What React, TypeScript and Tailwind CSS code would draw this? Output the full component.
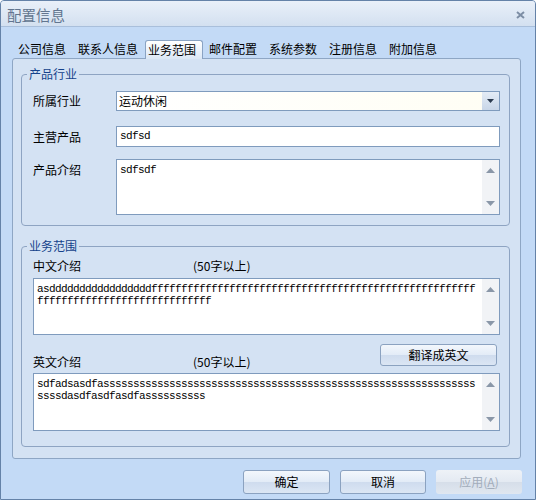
import React from "react";

const btnBg =
  "bg-[linear-gradient(to_bottom,#f3f7fc_0%,#e3ecf7_48%,#cfdcee_52%,#dbe6f4_100%)]";

function Arrow({ up }: { up?: boolean }) {
  return (
    <svg width="9" height="5" viewBox="0 0 9 5">
      <path d={up ? "M0 5 L4.5 0 L9 5 Z" : "M0 0 L4.5 5 L9 0 Z"} fill="#8a97a8" />
    </svg>
  );
}

function VScroll() {
  return (
    <div className="w-[17px] shrink-0 self-stretch bg-[#f1f3f6] flex flex-col justify-between items-center py-[8px]">
      <Arrow up />
      <Arrow />
    </div>
  );
}

function TextBox({ h, lines }: { h: string; lines: string[] }) {
  return (
    <div className={`flex border border-[#7f9bbd] bg-white ${h}`}>
      <div className="flex-1 pl-[3px] pt-[4px] font-['Liberation_Mono',monospace] text-[11px] tracking-[-0.6px] leading-[12px] text-black whitespace-pre overflow-hidden">
        {lines.map((l, i) => (
          <div key={i}>{l}</div>
        ))}
      </div>
      <VScroll />
    </div>
  );
}

function Tab({ label, active }: { label: string; active?: boolean }) {
  if (active) {
    return (
      <div className="relative z-10 ml-[1px] mb-[-1px] h-[19px] pl-[2px] pr-[6px] border border-b-0 border-[#8aa3c3] rounded-t-[3px] bg-[linear-gradient(to_bottom,#ffffff,#dbe7f5)] leading-[17px]">
        {label}
      </div>
    );
  }
  return <div className="h-[18px] px-[6px] leading-[18px]">{label}</div>;
}

export default function App() {
  const zh1 = "as" + "d".repeat(17) + "f".repeat(54);
  const zh2 = "f".repeat(29);
  const en1 = "sdfadsasdfa" + "s".repeat(62);
  const en2 = "ssssdasdfasdfasdfa" + "s".repeat(10);

  return (
    <div className="w-[536px] h-[500px] flex flex-col border border-[#6482a8] rounded-t-[4px] bg-[#c3daf6] text-[12px] text-black font-['Noto_Sans_CJK_SC','Noto_Sans',sans-serif] overflow-hidden">
      {/* title bar */}
      <div className="h-[26px] shrink-0 flex items-center justify-between pl-[6px] pr-[10px] pt-[2px] border-b border-[#a9bfdb] bg-[linear-gradient(to_bottom,#e9f0f9,#d3e0f0)]">
        <span className="text-[14.5px] text-[#62758f] leading-[20px]">配置信息</span>
        <svg width="9" height="8" viewBox="0 0 9 8">
          <path d="M1 1 L8 7 M8 1 L1 7" stroke="#7d8ea5" strokeWidth="2" />
        </svg>
      </div>

      {/* tabs */}
      <div className="h-[31px] shrink-0 flex items-end pl-[11px]">
        <Tab label="公司信息" />
        <Tab label="联系人信息" />
        <Tab label="业务范围" active />
        <Tab label="邮件配置" />
        <Tab label="系统参数" />
        <Tab label="注册信息" />
        <Tab label="附加信息" />
      </div>

      {/* panel */}
      <div className="h-[401px] shrink-0 ml-[11px] mr-[14px] border border-[#8ea6c4] rounded-[3px] bg-[#d4e2f3] pt-[7px] pb-[10px] pl-[8px] pr-[10px]">
        <fieldset className="border border-[#8ea4c2] rounded-[4px] px-[5px]">
          <legend className="px-[2px] leading-[16px] text-[#15428b]">产品行业</legend>
          <div className="pl-[6px] pr-[4px] pt-[9px] pb-[10px]">
            <div className="flex items-center h-[20px]">
              <span className="w-[83px] shrink-0">所属行业</span>
              <div className="flex-1 h-[20px] flex border border-[#7f9bbd] bg-[linear-gradient(to_right,#ffffff,#fffef4)]">
                <span className="flex-1 pl-[2px] leading-[18px]">运动休闲</span>
                <div className="w-[17px] bg-[linear-gradient(to_bottom,#e4ecf6,#c8d6e8)] flex items-center justify-center">
                  <svg width="7" height="4" viewBox="0 0 7 4">
                    <path d="M0 0 L3.5 4 L7 0 Z" fill="#2b3a4e" />
                  </svg>
                </div>
              </div>
            </div>
            <div className="flex items-center h-[21px] mt-[15px]">
              <span className="w-[83px] shrink-0">主营产品</span>
              <div className="flex-1 h-[21px] border border-[#7f9bbd] bg-white pl-[3px] font-['Liberation_Mono',monospace] text-[11px] tracking-[-0.6px] leading-[19px]">
                sdfsd
              </div>
            </div>
            <div className="flex mt-[12px]">
              <span className="w-[83px] shrink-0 pt-[3px] leading-[16px]">产品介绍</span>
              <div className="flex-1">
                <TextBox h="h-[56px]" lines={["sdfsdf"]} />
              </div>
            </div>
          </div>
        </fieldset>

        <fieldset className="mt-[12px] border border-[#8ea4c2] rounded-[4px] px-[5px]">
          <legend className="px-[2px] leading-[16px] text-[#15428b]">业务范围</legend>
          <div className="pl-[6px] pr-[4px] pt-[5px] pb-[15px]">
            <div className="flex leading-[14px]">
              <span className="w-[160px]">中文介绍</span>
              <span>(50字以上)</span>
            </div>
            <div className="mt-[5px]">
              <TextBox h="h-[57px]" lines={[zh1, zh2]} />
            </div>
            <div className="mt-[9px] flex justify-between h-[25px]">
              <div className="flex leading-[14px] pt-[11px]">
                <span className="w-[160px]">英文介绍</span>
                <span>(50字以上)</span>
              </div>
              <button className={`mr-[3px] w-[117px] h-[22px] border border-[#8ba2c0] rounded-[3px] ${btnBg} leading-[20px]`}>
                翻译成英文
              </button>
            </div>
            <div className="mt-[4px]">
              <TextBox h="h-[58px]" lines={[en1, en2]} />
            </div>
          </div>
        </fieldset>
      </div>

      {/* buttons */}
      <div className="flex justify-end gap-[10px] pt-[11px] pr-[13px]">
        <button className={`w-[87px] h-[24px] border border-[#8ba2c0] rounded-[3px] ${btnBg} leading-[22px]`}>确定</button>
        <button className={`w-[86px] h-[24px] border border-[#8ba2c0] rounded-[3px] ${btnBg} leading-[22px]`}>取消</button>
        <button className="w-[86px] h-[24px] rounded-[3px] bg-[linear-gradient(to_bottom,#eef2f7_0%,#e4eaf2_48%,#d6dee9_52%,#e0e7f0_100%)] text-[#a3adbb] leading-[24px]">
          应用(<u>A</u>)
        </button>
      </div>
    </div>
  );
}
